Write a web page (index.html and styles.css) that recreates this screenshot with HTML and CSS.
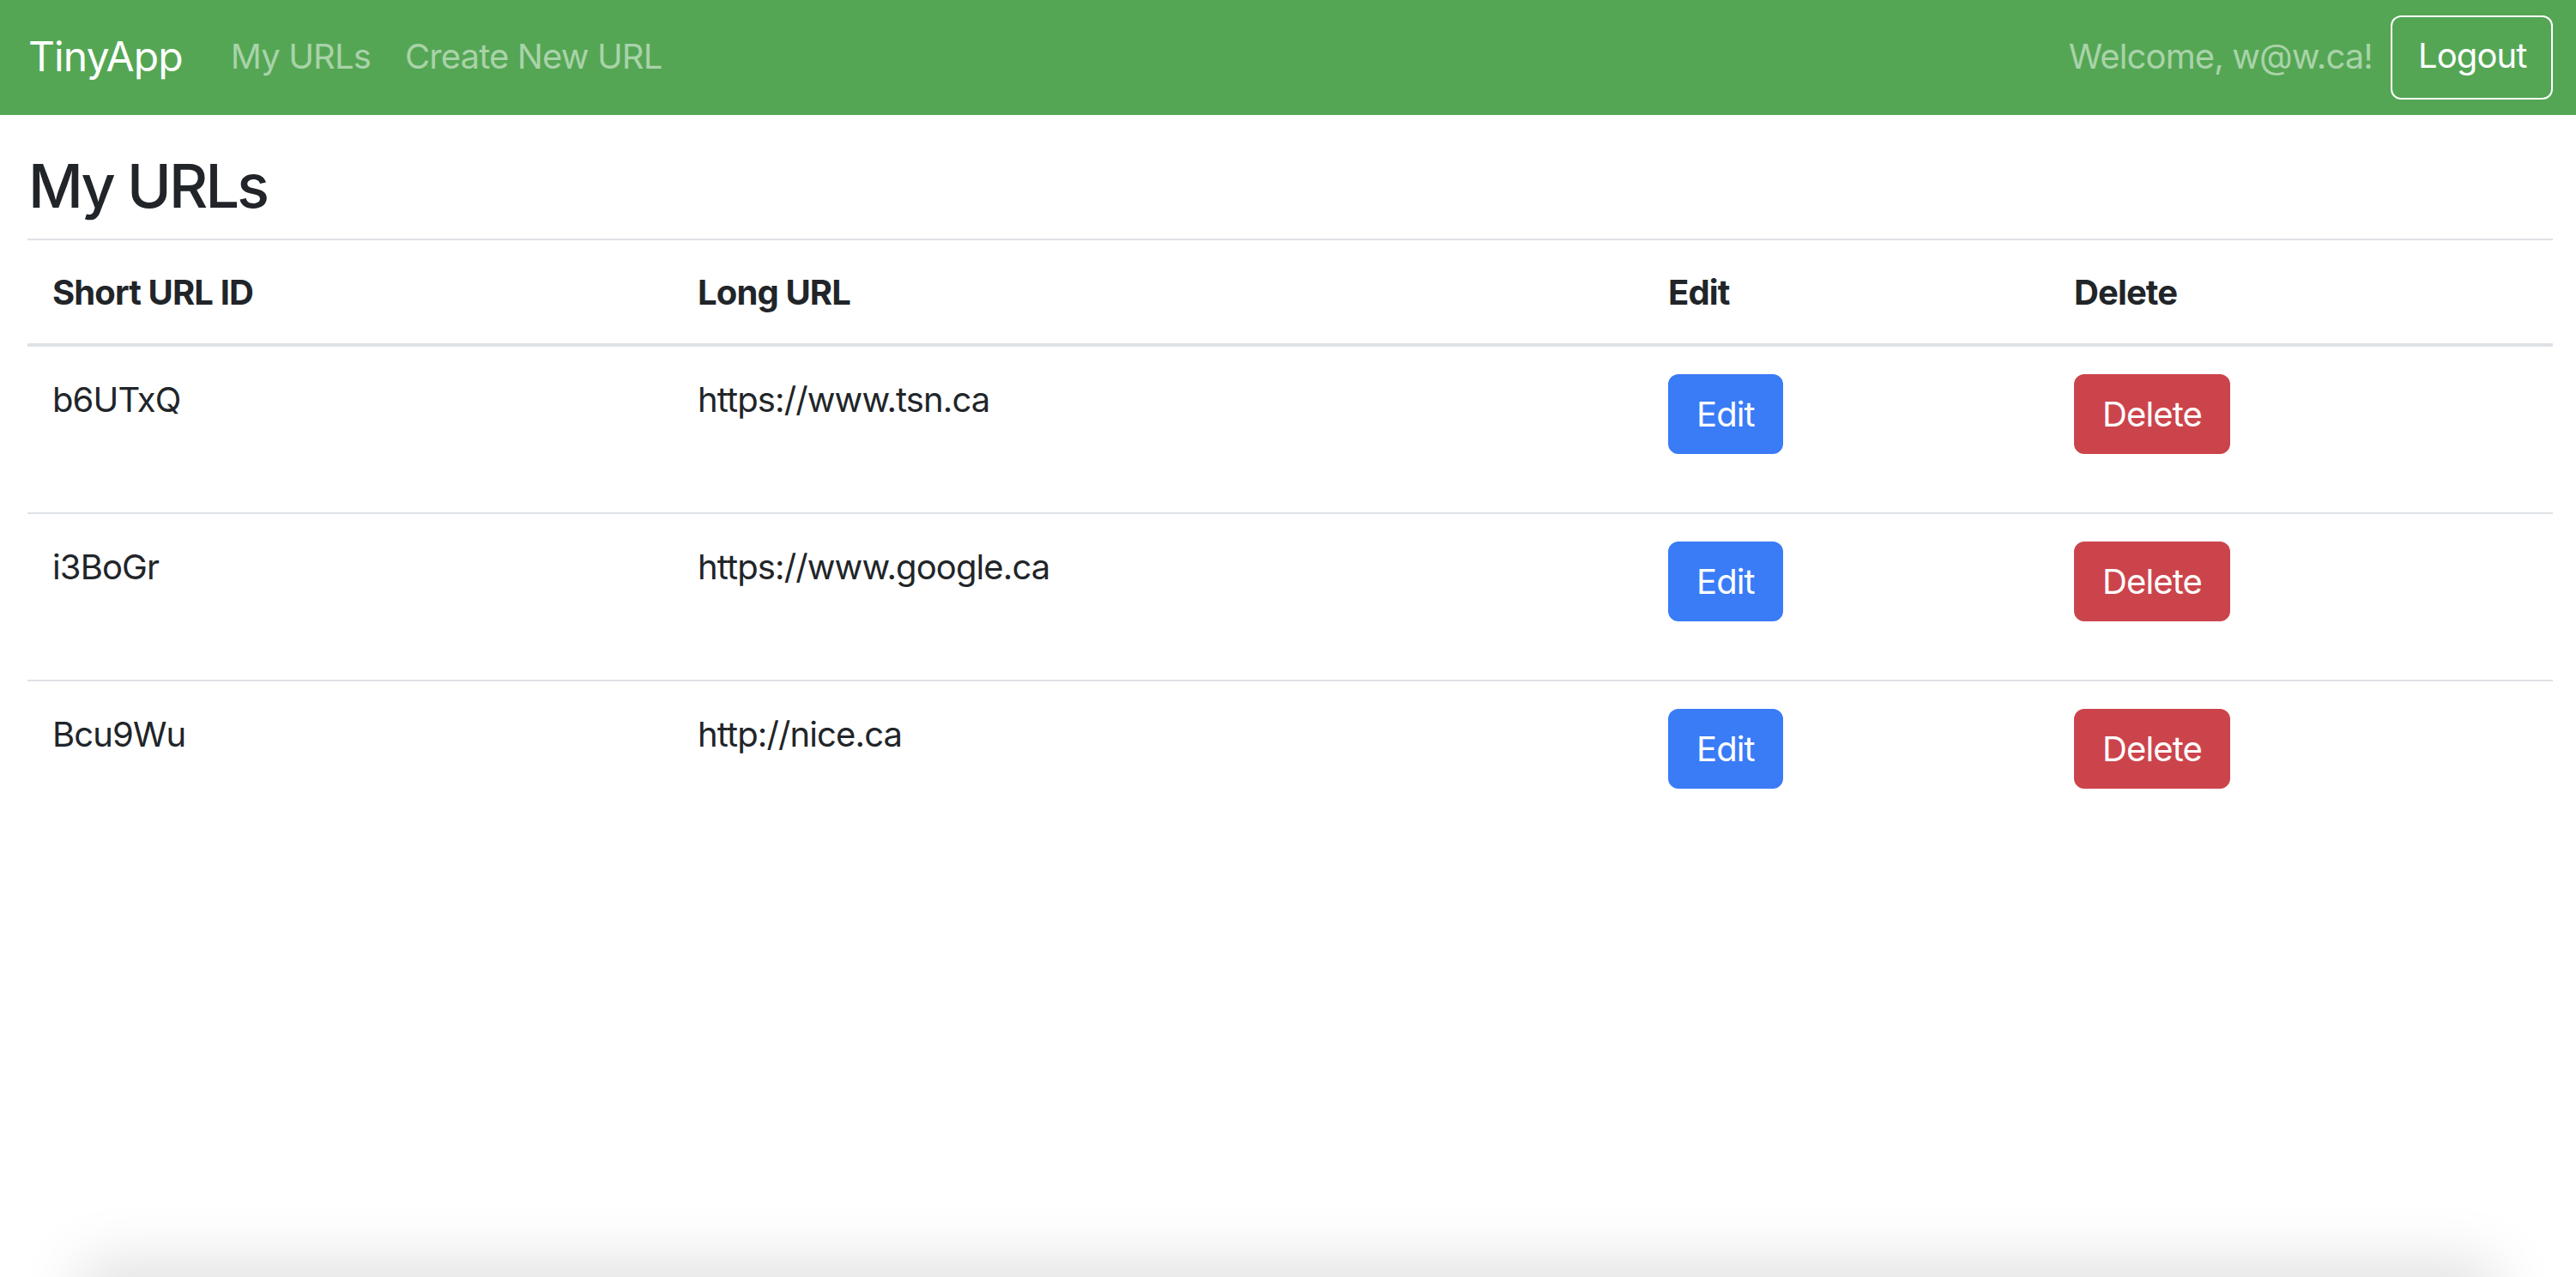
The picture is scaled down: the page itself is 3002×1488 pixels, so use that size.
FILE: index.html
```html
<!DOCTYPE html>
<html lang="en">
<head>
<meta charset="utf-8">
<title>TinyApp</title>
<link rel="stylesheet" href="styles.css">
</head>
<body>
<nav class="navbar">
  <a class="brand" href="#">TinyApp</a>
  <div class="nav-links">
    <a class="nav-link" href="#">My URLs</a>
    <a class="nav-link" href="#">Create New URL</a>
  </div>
  <div class="nav-right">
    <span class="welcome">Welcome, w@w.ca!</span>
    <button class="btn-logout">Logout</button>
  </div>
</nav>
<main class="container">
  <h1 class="title">My URLs</h1>
  <table class="table">
    <colgroup>
      <col class="c1"><col class="c2"><col class="c3"><col class="c4">
    </colgroup>
    <thead>
      <tr><th>Short URL ID</th><th>Long URL</th><th>Edit</th><th>Delete</th></tr>
    </thead>
    <tbody>
      <tr>
        <td>b6UTxQ</td><td>https://www.tsn.ca</td>
        <td><form class="cell-form"><button type="button" class="btn btn-primary">Edit</button></form></td>
        <td><form class="cell-form"><button type="button" class="btn btn-danger">Delete</button></form></td>
      </tr>
      <tr>
        <td>i3BoGr</td><td>https://www.google.ca</td>
        <td><form class="cell-form"><button type="button" class="btn btn-primary">Edit</button></form></td>
        <td><form class="cell-form"><button type="button" class="btn btn-danger">Delete</button></form></td>
      </tr>
      <tr>
        <td>Bcu9Wu</td><td>http://nice.ca</td>
        <td><form class="cell-form"><button type="button" class="btn btn-primary">Edit</button></form></td>
        <td><form class="cell-form"><button type="button" class="btn btn-danger">Delete</button></form></td>
      </tr>
    </tbody>
  </table>
</main>
<div class="bottom-shade"></div>
</body>
</html>
```

FILE: styles.css
```css
html, body {
  margin: 0;
  padding: 0;
  background: #ffffff;
}
body {
  font-family: "Inter", "Liberation Sans", sans-serif;
  font-size: 40px;
  line-height: 1.5;
  letter-spacing: -0.022em;
  color: #212529;
  overflow: hidden;
  height: 1488px;
}
.navbar {
  display: flex;
  align-items: center;
  height: 134px;
  box-sizing: border-box;
  padding: 0 27px 0 33px;
  background: #54a654;
}
.brand {
  font-size: 48px;
  color: #ffffff;
  text-decoration: none;
  margin-right: 36px;
  line-height: 1.25;
  position: relative;
  top: -1px;
}
.nav-links {
  display: flex;
  flex: 1;
  position: relative;
  top: -1px;
}
.nav-link {
  color: #a9d3a9;
  text-decoration: none;
  padding: 0 20px;
}
.nav-right {
  display: flex;
  align-items: center;
  gap: 21px;
}
.welcome {
  color: #a9d3a9;
  position: relative;
  top: -1px;
}
.btn-logout {
  font-family: inherit;
  font-size: 40px;
  line-height: 1.5;
  letter-spacing: -0.022em;
  color: #ffffff;
  background: transparent;
  border: 2px solid #ffffff;
  border-radius: 12px;
  padding: 15px 30px 19px;
  width: 189px;
  height: 98px;
}
.container {
  padding: 41px 27px 0 32px;
}
.title {
  font-size: 70px;
  font-weight: 500;
  line-height: 1.2;
  letter-spacing: -0.04em;
  margin: 0 0 19px 1px;
}
.table {
  width: 100%;
  border-collapse: collapse;
  table-layout: fixed;
}
.c1 { width: 752px; }
.c2 { width: 1131px; }
.c3 { width: 473px; }
.c4 { width: auto; }
.table thead tr {
  border-top: 2px solid #dee2e6;
  border-bottom: 4px solid #dee2e6;
}
.table th {
  text-align: left;
  font-weight: 700;
  padding: 31px 28px 29px 29px;
  vertical-align: bottom;
}
.table tbody tr {
  border-bottom: 2px solid #dee2e6;
}
.table tbody tr:last-child {
  border-bottom: none;
}
.table td {
  padding: 32px 28px 28px 29px;
  vertical-align: top;
}
.cell-form {
  margin: 0 0 40px 0;
}
.btn {
  font-family: inherit;
  font-size: 40px;
  line-height: 1.5;
  letter-spacing: -0.022em;
  color: #ffffff;
  border: 2px solid transparent;
  border-radius: 12px;
  padding: 14px 31px;
  height: 93px;
  cursor: pointer;
}
.btn-primary {
  background: #3a7bf6;
  border-color: #3a7bf6;
}
.btn-danger {
  background: #cc444b;
  border-color: #cc444b;
}
.bottom-shade {
  position: fixed;
  left: 110px;
  right: 110px;
  bottom: -50px;
  height: 50px;
  box-shadow: 0 0 70px 16px rgba(0, 0, 0, 0.13);
  background: rgba(0, 0, 0, 0.13);
}
```
